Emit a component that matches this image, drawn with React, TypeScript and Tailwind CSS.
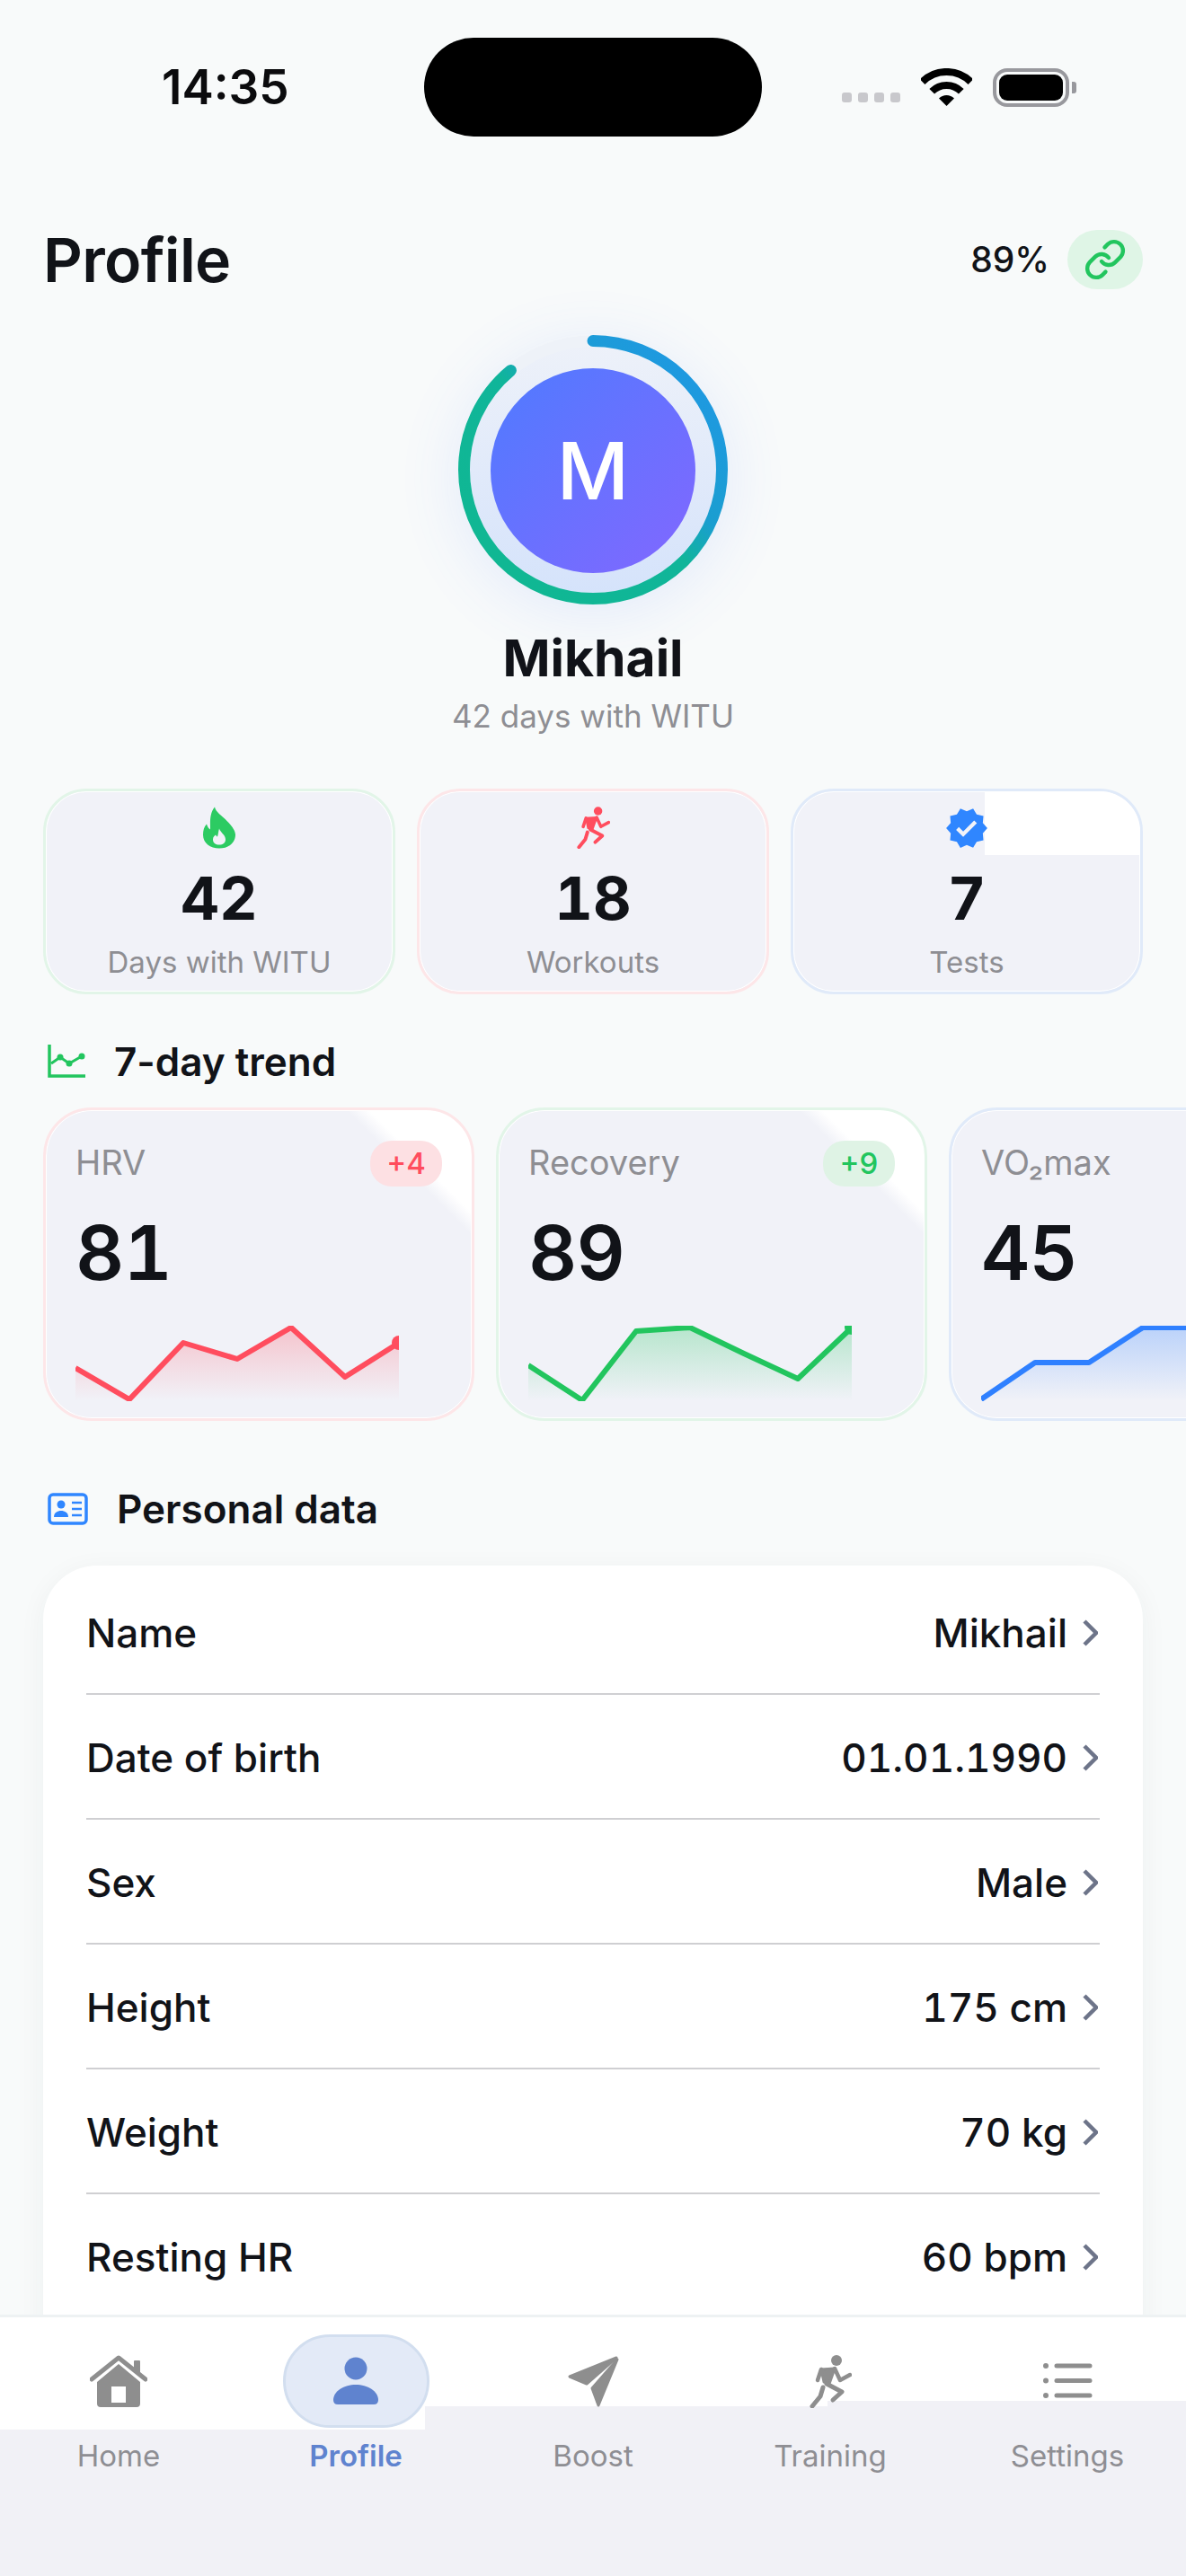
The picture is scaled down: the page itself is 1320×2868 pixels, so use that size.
import React from 'react';
import { Link as LinkIcon } from 'lucide-react';
import { MdVerified } from 'react-icons/md';

type Stat = { value: string; label: string; border: string; icon: React.ReactNode; patch?: boolean };
type Trend = {
  id: string;
  label: React.ReactNode;
  value: string;
  delta?: string;
  deltaClass?: string;
  border: string;
  color: string;
  points: number[];
  dot?: boolean;
  cardClass: string;
};

const RunnerIcon = ({ color, className }: { color: string; className: string }) => (
  <svg viewBox="0 0 47 59" className={className} fill="none" stroke={color} strokeLinecap="round" strokeLinejoin="round">
    <circle cx="30" cy="6" r="6" fill={color} stroke="none" />
    <path d="M13 16L28 15L22 32L16 30Z" fill={color} strokeWidth="3" />
    <path d="M13 16L9 28" strokeWidth="4.5" />
    <path d="M28 15L34 28L45 22" strokeWidth="4.5" />
    <path d="M19 32L36 41L26 50" strokeWidth="5" />
    <path d="M15 36L12 46L3 57" strokeWidth="5" />
  </svg>
);

const FlameIcon = () => (
  <svg viewBox="0 0 36 46" className="w-[36px] h-[47px]">
    <path
      fillRule="evenodd"
      fill="#2ccb62"
      d="M13 0C14 6 21 9 27 16C33 22 36 27 36 31C36 40 28 46 18 46C8 46 0 40 0 31C0 26 1 22 4 19C5 22 6 24 8 25C8 17 7 7 13 0ZM18 24C19 28 25 31 25 36C25 40 22 42 18 42C14 42 11 40 11 36C11 33 13 32 14 31C15 32 15 33 16 33C17 30 17 27 18 24Z"
    />
  </svg>
);

const stats: Stat[] = [
  { value: '42', label: 'Days with WITU', border: 'border-[#e2f5e8]', icon: <FlameIcon /> },
  { value: '18', label: 'Workouts', border: 'border-[#fde6e8]', icon: <RunnerIcon color="#ff4d5e" className="w-[37px] h-[47px]" /> },
  { value: '7', label: 'Tests', border: 'border-[#e0eaf9]', icon: <MdVerified className="w-[50px] h-[50px] -my-[2px] text-[#2f86ff]" />, patch: true },
];

const trends: Trend[] = [
  {
    id: 'hrv',
    label: 'HRV',
    value: '81',
    delta: '+4',
    deltaClass: 'bg-[#fde0e3] text-[#ff4d5e]',
    border: 'border-[#fde6e8]',
    color: '#ff4d5e',
    points: [47, 82, 19, 37, 2, 57, 19],
    dot: true,
    cardClass: 'bg-[linear-gradient(225deg,#fff_14%,#f1f2f8_17%)]',
  },
  {
    id: 'recovery',
    label: 'Recovery',
    value: '89',
    delta: '+9',
    deltaClass: 'bg-[#dff3e5] text-[#22c55e]',
    border: 'border-[#e2f5e8]',
    color: '#22c55e',
    points: [44, 83, 6, 2, 31, 59, 2],
    dot: true,
    cardClass: 'bg-[linear-gradient(225deg,#fff_14%,#f1f2f8_17%)]',
  },
  {
    id: 'vo2',
    label: 'VO₂max',
    value: '45',
    border: 'border-[#e0eaf9]',
    color: '#2f80ff',
    points: [82, 41, 41, 2, 2, 2, 2],
    cardClass: 'bg-[#f1f2f8]',
  },
];

const rows = [
  ['Name', 'Mikhail'],
  ['Date of birth', '01.01.1990'],
  ['Sex', 'Male'],
  ['Height', '175 cm'],
  ['Weight', '70 kg'],
  ['Resting HR', '60 bpm'],
];

const Sparkline = ({ trend }: { trend: Trend }) => {
  const coords = trend.points.map((y, i) => `${i * 60},${y}`).join(' L');
  const last = trend.points[trend.points.length - 1];
  return (
    <svg viewBox="0 0 360 84" className="mt-[36px] w-[360px] h-[84px] block">
      <defs>
        <linearGradient id={`fill-${trend.id}`} x1="0" y1="0" x2="0" y2="1">
          <stop offset="0" stopColor={trend.color} stopOpacity="0.28" />
          <stop offset="1" stopColor={trend.color} stopOpacity="0" />
        </linearGradient>
      </defs>
      <path d={`M${coords} L360,84 L0,84Z`} fill={`url(#fill-${trend.id})`} />
      <path d={`M${coords}`} fill="none" stroke={trend.color} strokeWidth="6" strokeLinejoin="round" />
      {trend.dot && <circle cx="360" cy={last} r="8" fill={trend.color} />}
    </svg>
  );
};

const TrendCard = ({ trend }: { trend: Trend }) => (
  <div className={`shrink-0 w-[480px] h-[349px] rounded-[54px] border-[3px] px-[33px] pt-[34px] shadow-[inset_0_0_0_1px_#fff] ${trend.border} ${trend.cardClass}`}>
    <div className="flex items-center justify-between h-[51px]">
      <span className="text-[38px] text-[#8e8e93] -mt-[2px]">{trend.label}</span>
      {trend.delta && (
        <span className={`flex items-center justify-center w-[80px] h-[51px] rounded-[24px] text-[33px] font-medium ${trend.deltaClass}`}>
          {trend.delta}
        </span>
      )}
    </div>
    <div className="mt-[29px] h-[90px] leading-[90px] text-[84px] font-semibold tabular-nums tracking-[-0.01em] text-[#111318]">{trend.value}</div>
    <Sparkline trend={trend} />
  </div>
);

const StatCard = ({ stat }: { stat: Stat }) => (
  <div className={`relative overflow-hidden flex-1 h-[229px] rounded-[48px] border-[3px] bg-[#f1f2f8] flex flex-col items-center pt-[17px] shadow-[inset_0_0_0_1px_#fff] ${stat.border}`}>
    {stat.patch && <div className="absolute top-0 right-0 w-[173px] h-[71px] bg-white" />}
    <div className="relative h-[47px] flex items-center">{stat.icon}</div>
    <div className="relative mt-[20px] h-[70px] leading-[70px] text-[66px] font-bold tabular-nums text-[#111318]">{stat.value}</div>
    <div className="relative mt-[16px] h-[40px] leading-[40px] text-[33px] text-[#8e8e93]">{stat.label}</div>
  </div>
);

const NavItem = ({ label, active, children }: { label: string; active?: boolean; children: React.ReactNode }) => (
  <div className="relative w-[264px] flex flex-col items-center">
    <div className="h-[104px] flex items-center justify-center">
      {active ? (
        <div className="w-[163px] h-[104px] rounded-[52px] bg-[#e3eaf7] border-[3px] border-[#d2deef] flex items-center justify-center">{children}</div>
      ) : (
        children
      )}
    </div>
    <div className={`mt-[11px] h-[40px] leading-[40px] text-[33px] ${active ? 'font-semibold text-[#5f83cf]' : 'text-[#8e8e93]'}`}>{label}</div>
  </div>
);

const App: React.FC = () => {
  return (
    <div className="w-[1320px] h-[2868px] flex flex-col overflow-hidden bg-[#f8fafa] font-['Inter',sans-serif] text-[#111318]">
      <main className="flex-1 min-h-0 overflow-hidden">
        {/* status bar */}
        <div className="flex items-center pt-[42px] h-[152px] pl-[180px]">
          <div className="w-[292px] text-[53px] font-semibold text-[#0b0b0d] leading-none">14:35</div>
          <div className="w-[376px] h-[110px] rounded-[55px] bg-black" />
          <div className="ml-[89px] flex items-center">
            <div className="flex gap-[7px] mt-[22px]">
              <span className="w-[11px] h-[11px] rounded-[3px] bg-[#c8c8cc]" />
              <span className="w-[11px] h-[11px] rounded-[3px] bg-[#c8c8cc]" />
              <span className="w-[11px] h-[11px] rounded-[3px] bg-[#c8c8cc]" />
              <span className="w-[11px] h-[11px] rounded-[3px] bg-[#c8c8cc]" />
            </div>
            <svg viewBox="0 0 57 42" className="ml-[23px] w-[57px] h-[42px]">
              <path d="M1.6 15.1A38 38 0 0 1 55.4 15.1" fill="none" stroke="#000" strokeWidth="8" />
              <path d="M12.2 25.7A23 23 0 0 1 44.8 25.7" fill="none" stroke="#000" strokeWidth="8" />
              <path d="M28.5 42L20 33.5A12 12 0 0 1 37 33.5Z" fill="#000" />
            </svg>
            <div className="ml-[23px] w-[85px] h-[43px] rounded-[16px] border-[4px] border-[#98989d] p-[3px]">
              <div className="w-full h-full rounded-[9px] bg-black" />
            </div>
            <div className="ml-[3px] w-[5px] h-[13px] rounded-r-[3px] bg-[#98989d]" />
          </div>
        </div>

        <div className="mt-[104px] px-[48px] flex items-center justify-between h-[66px]">
          <h1 className="text-[68px] font-semibold leading-none tracking-[-0.01em]">Profile</h1>
          <div className="flex items-center gap-[20px]">
            <span className="text-[39px] font-medium">89%</span>
            <div className="w-[84px] h-[66px] rounded-[33px] bg-[#dff5e6] flex items-center justify-center">
              <LinkIcon size={48} strokeWidth={2.2} className="text-[#22c55e]" />
            </div>
          </div>
        </div>

        {/* avatar ring */}
        <div className="relative mt-[51px] mx-auto w-[300px] h-[300px] rounded-full shadow-[0_10px_70px_rgba(70,120,255,0.12)]">
          <div className="absolute inset-[12px] rounded-full bg-[linear-gradient(180deg,#edf1f9,#d5e3fb)]" />
          <svg viewBox="0 0 300 300" className="absolute inset-0 w-[300px] h-[300px] -rotate-90">
            <defs>
              <linearGradient id="ring" gradientUnits="userSpaceOnUse" x1="300" y1="300" x2="0" y2="0">
                <stop offset="0" stopColor="#2196ea" />
                <stop offset="0.38" stopColor="#1a9ed0" />
                <stop offset="0.5" stopColor="#10b59a" />
                <stop offset="1" stopColor="#10b890" />
              </linearGradient>
            </defs>
            <circle cx="150" cy="150" r="143.5" fill="none" stroke="#eef2f8" strokeWidth="13" />
            <circle cx="150" cy="150" r="143.5" fill="none" stroke="url(#ring)" strokeWidth="13" strokeLinecap="round" strokeDasharray="802 902" />
          </svg>
          <div className="absolute left-[36px] top-[37px] w-[228px] h-[228px] rounded-full bg-[linear-gradient(135deg,#4f7bff,#8267ff)] flex items-center justify-center text-white text-[88px] font-medium">
            M
          </div>
        </div>

        <div className="mt-[24px] h-[72px] leading-[72px] text-center text-[57px] font-bold">Mikhail</div>
        <div className="mt-[6px] h-[44px] leading-[44px] text-center text-[35px] text-[#8e8e93]">42 days with WITU</div>

        <div className="mt-[59px] px-[48px] flex gap-[24px]">
          {stats.map((s) => (
            <StatCard key={s.label} stat={s} />
          ))}
        </div>

        <div className="mt-[51px] px-[53px] flex items-center h-[48px]">
          <svg viewBox="0 0 42 37" className="w-[42px] h-[37px] -mt-[2px]" fill="none" stroke="#22c55e">
            <path d="M2 0V35H42" strokeWidth="3.5" />
            <path d="M4 21L14 14L24 21L38 13" strokeWidth="3" />
            <circle cx="14" cy="14" r="3.5" fill="#22c55e" stroke="none" />
            <circle cx="24" cy="21" r="3.5" fill="#22c55e" stroke="none" />
            <circle cx="38" cy="13" r="3.5" fill="#22c55e" stroke="none" />
          </svg>
          <span className="ml-[32px] text-[44px] font-semibold">7-day trend</span>
        </div>

        <div className="mt-[27px] pl-[48px] flex gap-[24px]">
          {trends.map((t) => (
            <TrendCard key={t.id} trend={t} />
          ))}
        </div>

        <div className="mt-[74px] px-[53px] flex items-center h-[48px]">
          <svg viewBox="0 0 45 36" className="w-[45px] h-[36px]" fill="none">
            <rect x="2" y="2" width="41" height="32" rx="4" stroke="#2f86ff" strokeWidth="3.5" />
            <circle cx="15" cy="13" r="4.5" fill="#2f86ff" />
            <path d="M7 27C7 22 11 20 15 20C19 20 23 22 23 27Z" fill="#2f86ff" />
            <path d="M27 11H38M27 18H38M27 25H38" stroke="#2f86ff" strokeWidth="2.5" />
          </svg>
          <span className="ml-[32px] text-[44px] font-semibold">Personal data</span>
        </div>

        <div className="mt-[39px] mx-[48px] pt-[5px] px-[48px] rounded-t-[60px] bg-white shadow-[0_6px_30px_rgba(30,60,60,0.05)] h-[900px]">
          {rows.map(([label, value]) => (
            <div key={label} className="flex items-center justify-between h-[139px] pt-[2px] border-b-2 border-[#cfcfd2] text-[44px] font-medium">
              <span>{label}</span>
              <span className="flex items-center tabular-nums">
                {value}
                <svg viewBox="0 0 17 30" className="ml-[17px] mr-[2px] w-[17px] h-[30px]" fill="none" stroke="#6d7489" strokeWidth="4.5">
                  <path d="M2 2L15 15L2 28" />
                </svg>
              </span>
            </div>
          ))}
        </div>
      </main>

      {/* bottom nav */}
      <nav className="relative shrink-0 h-[291px] bg-[#f1f1f6] border-t-[3px] border-[#eef2f3]">
        <div className="absolute top-0 left-0 right-0 flex items-start">
          <div className="w-[473px] h-[125px] bg-white" />
          <div className="w-[448px] h-[99px] bg-white" />
          <div className="flex-1 h-[93px] bg-white" />
        </div>
        <div className="relative flex pt-[19px]">
          <NavItem label="Home">
            <svg viewBox="0 0 64 58" className="w-[64px] h-[58px]" fill="#8e8e8e">
              <path d="M2 27L32 3L62 27" fill="none" stroke="#8e8e8e" strokeWidth="5" strokeLinecap="round" strokeLinejoin="round" />
              <rect x="49" y="6" width="7" height="14" rx="1" />
              <path fillRule="evenodd" d="M32 10L56 30V54Q56 58 52 58H12Q8 58 8 54V30ZM24 35V53H40V35Z" />
            </svg>
          </NavItem>
          <NavItem label="Profile" active>
            <svg viewBox="0 0 50 54" className="w-[50px] h-[54px]" fill="#5f83cf">
              <circle cx="25" cy="13" r="12.5" />
              <path d="M0 48C0 38 12 31 25 31C38 31 50 38 50 48Q50 53 45 53H5Q0 53 0 48Z" />
            </svg>
          </NavItem>
          <NavItem label="Boost">
            <svg viewBox="0 0 58 57" className="w-[58px] h-[57px]" fill="#8e8e8e" stroke="#8e8e8e" strokeWidth="3" strokeLinejoin="round">
              <path d="M55 2L3 23L22 31Z" />
              <path d="M56 4L28 36L35 55Z" />
            </svg>
          </NavItem>
          <NavItem label="Training">
            <RunnerIcon color="#8e8e8e" className="w-[47px] h-[59px]" />
          </NavItem>
          <NavItem label="Settings">
            <svg viewBox="0 0 55 40" className="w-[55px] h-[40px]" fill="#8e8e8e" stroke="#8e8e8e" strokeLinecap="round">
              <circle cx="3" cy="3" r="3" stroke="none" />
              <circle cx="3" cy="19.5" r="3" stroke="none" />
              <circle cx="3" cy="36" r="3" stroke="none" />
              <path d="M15 3H52M15 19.5H52M15 36H52" strokeWidth="5" fill="none" />
            </svg>
          </NavItem>
        </div>
      </nav>
    </div>
  );
};

export default App;
